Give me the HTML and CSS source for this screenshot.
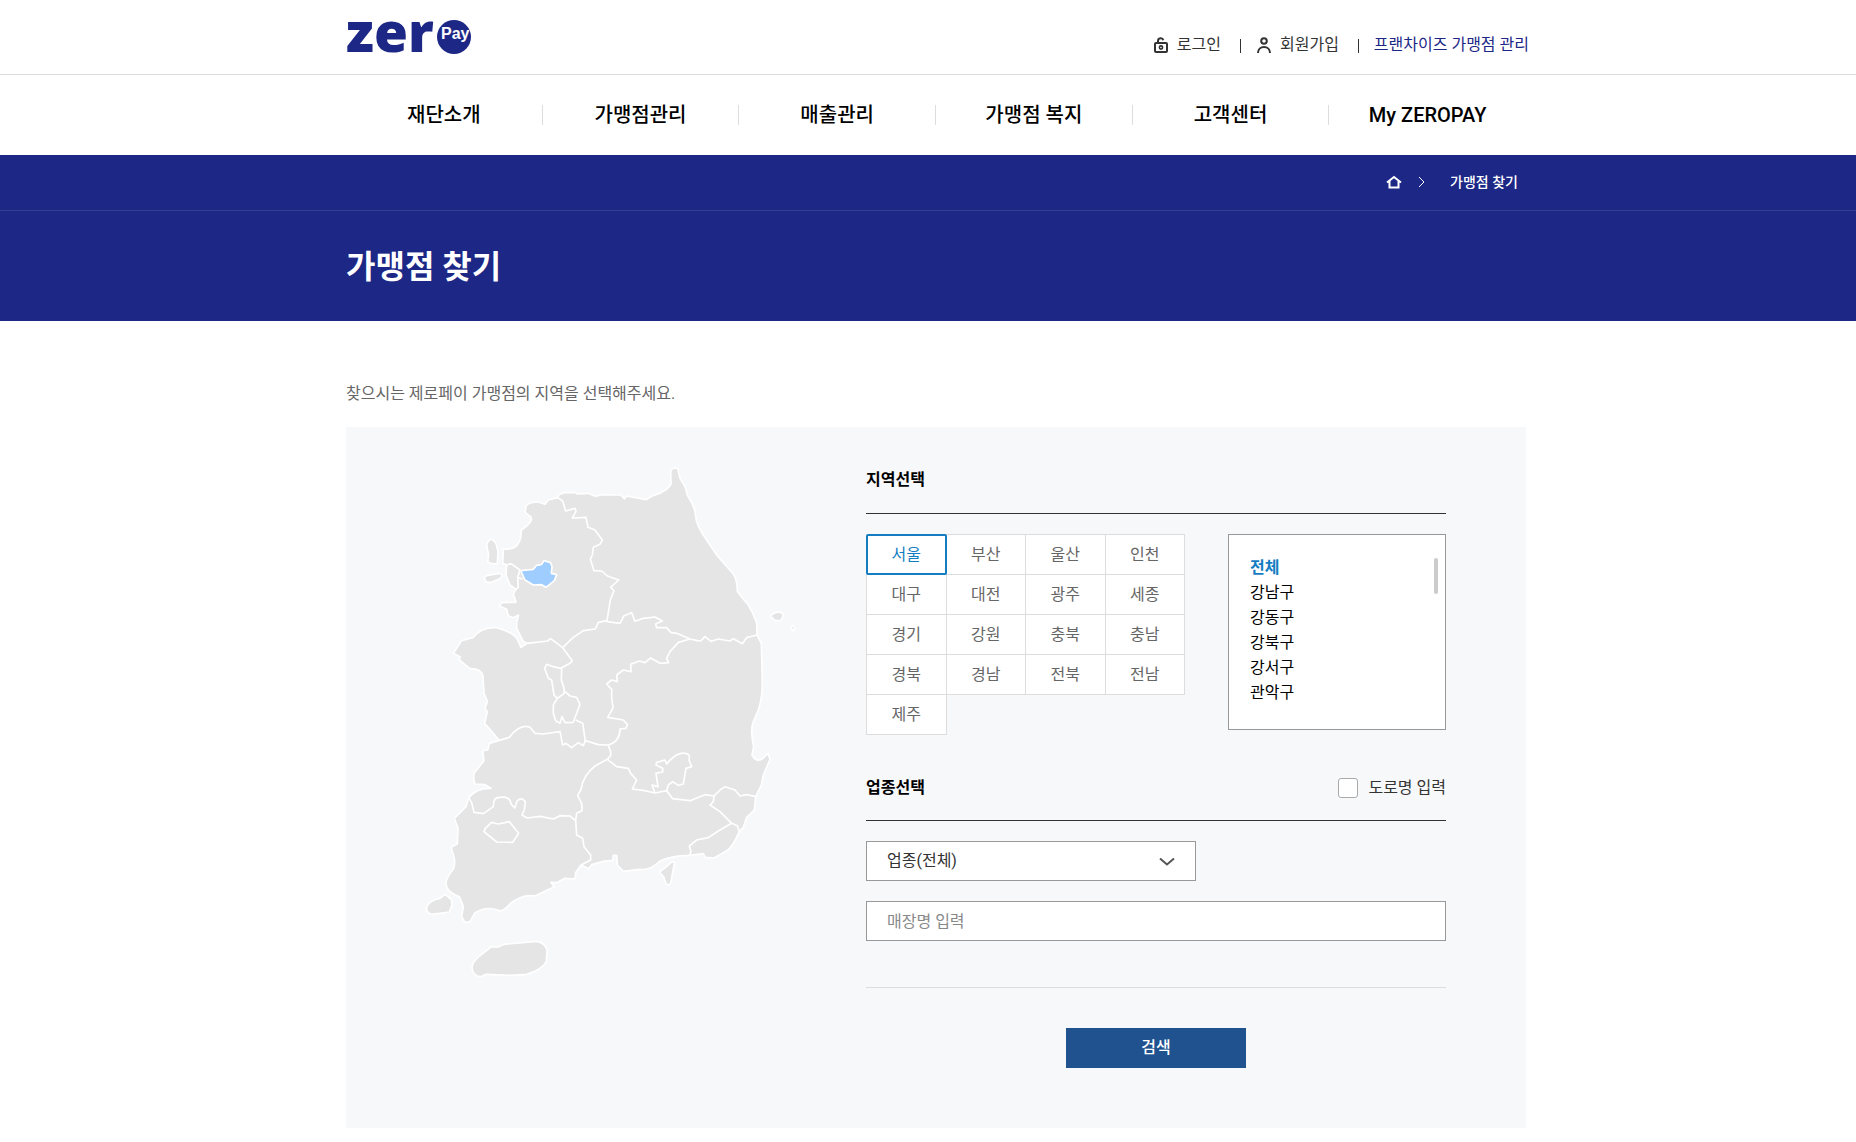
FILE: index.html
```html
<!DOCTYPE html>
<html lang="ko">
<head>
    <meta charset="UTF-8">
    <meta name="viewport" content="width=device-width, initial-scale=1.0">
    <title>가맹점 찾기 | 제로페이</title>
    <link rel="stylesheet" href="styles.css">
</head>
<body>
    <header>
        <div class="top">
            <div class="inner top_inner">
                <a class="logo" href="#" aria-label="zeroPay">
                    <svg width="128" height="44" viewBox="0 0 128 44">
                        <circle cx="108" cy="25" r="17" fill="#1c2786"/>
                        <text class="logo_zer" x="0" y="40">zer</text>
                        <text class="logo_pay" x="95" y="27">Pay</text>
                    </svg>
                </a>
                <nav class="util">
                    <a href="#">
                        <svg width="16" height="18" viewBox="0 0 16 18" fill="none" stroke="#333" stroke-width="2">
                            <rect x="2" y="7" width="12" height="9" rx="1"/>
                            <path d="M5 7V5a2.700 2.700 0 0 1 5.300-.7"/>
                            <circle cx="8" cy="11.500" r="1.600" stroke-width="1.600"/>
                        </svg>
                        로그인
                    </a>
                    <a href="#">
                        <svg width="16" height="18" viewBox="0 0 16 18" fill="none" stroke="#333" stroke-width="2">
                            <circle cx="8" cy="5" r="2.800"/>
                            <path d="M2 17c0-3.500 2.500-6 6-6s6 2.500 6 6"/>
                        </svg>
                        회원가입
                    </a>
                    <a class="franchise" href="#">프랜차이즈 가맹점 관리</a>
                </nav>
            </div>
        </div>
        <nav class="inner gnb">
            <a href="#">재단소개</a>
            <a href="#">가맹점관리</a>
            <a href="#">매출관리</a>
            <a href="#">가맹점 복지</a>
            <a href="#">고객센터</a>
            <a href="#">My ZEROPAY</a>
        </nav>
    </header>
    <section class="visual">
        <div class="location">
            <div class="inner location_inner">
                <a href="#" aria-label="홈">
                    <svg width="16" height="14" viewBox="0 0 16 14" fill="none" stroke="#fff" stroke-width="2">
                        <path d="M1 7.500L8 2l7 5.500M3.500 6v6.500h9V6"/>
                    </svg>
                </a>
                <svg width="8" height="12" viewBox="0 0 8 12" fill="none" stroke="#fff">
                    <path d="M1 1l5 5-5 5"/>
                </svg>
                <span>가맹점 찾기</span>
            </div>
        </div>
        <div class="inner"><h1>가맹점 찾기</h1></div>
    </section>
    <main class="inner">
        <p class="guide">찾으시는 제로페이 가맹점의 지역을 선택해주세요.</p>
        <div class="search_box">
            <svg class="map" viewBox="0 0 1200 1650" role="img" aria-label="전국 지도">
                <!-- 본토 -->
                <path class="land" d="M443 143L446 134 462 128 495 127 502 132 535 130 555 139 575 134 632 135 643 146 650 138 708 149 725 139 750 130 770 118 783 103 782 66Q784 53 795 55Q804 50 806 68L810 85 825 110 833 137Q856 170 857 200Q860 225 880 255L920 315 970 372Q982 390 982 425L1015 465Q1030 490 1040 518L1041 555 1054 580 1057 700Q1057 745 1045 780L1030 815Q1020 840 1031 890L1026 915Q1040 940 1060 924L1074 910 1080 928 1060 975 1054 1005 1037 1040 1033 1080 1010 1102 1000 1132 988 1145Q965 1195 950 1202L912 1224 885 1222 880 1211 838 1216Q780 1218 750 1233Q720 1262 690 1258L640 1264 622 1245 620 1216 610 1216 608 1231 580 1234 545 1244 536 1256 513 1245 497 1268 495 1287 465 1285 440 1298 422 1297 433 1310 375 1338Q335 1332 300 1362Q275 1390 262 1380Q230 1368 195 1388L180 1415 165 1418 155 1400 160 1370 148 1340Q105 1325 108 1295Q112 1280 130 1257Q140 1235 125 1200L125 1190 142 1182 144 1135 133 1105 168 1070 176 1043Q200 1013 243 1015L225 1004 195 1002Q185 970 200 960L222 932 218 902 233 900 238 880 268 871 224 820 232 785 225 775 232 755 222 730 219 680Q215 655 180 656L148 630 150 620 130 610 155 572 190 562Q215 530 260 533Q320 550 325 575L333 592 352 580 340 575 320 535 320 515 326 495 310 503 295 497 290 478 268 468 275 458 318 457 310 432 318 418 300 405 288 375 290 345 278 340 280 297Q315 300 325 280Q334 268 334 240L350 228Q370 210 362 200L345 187 348 168Q360 155 385 156L405 163 415 150Z"/>
                <!-- 시도 경계 -->
                <g class="border">
                    <path d="M443 143L458 153 467 183 495 175 498 184 487 204 528 202 534 232 555 240 577 270 570 283 550 292 547 315 541 328 552 362 575 363 592 378 626 390 602 412 612 422 601 450 591 512 565 517 556 537 520 542 490 562 458 593"/>
                    <path d="M352 580L412 573 422 566 458 593"/>
                    <path d="M591 515L630 520 642 497 665 488 675 514 700 505 735 501 757 513 737 522 740 533 770 533 782 547 800 550 840 567 862 572 872 573 885 560 903 574 925 567 960 573 970 566 997 581 1010 563 1041 555"/>
                    <path d="M840 567L805 577 780 605 770 625 776 638 750 640 722 624 705 638 688 633 662 643 663 665 640 660 620 675 622 695 605 690 590 702 605 718 605 745 609 770 606 780 593 802 640 810 652 823 648 835 630 837Q630 875 595 885"/>
                    <path d="M458 593L487 632 480 640 452 655 430 650 410 643 404 655 415 685 425 690 432 735 442 745 463 730 462 715 454 690 455 655"/>
                    <path d="M442 745L430 765 430 790 437 812 450 820 456 800 465 818 490 817 500 790 510 763 500 742 480 738 465 725"/>
                    <path d="M497 810L518 820 526 872 565 884 595 885 602 905 602 917 592 928 555 948Q520 975 512 1020L503 1037 515 1060 516 1082 500 1090 497 1112 500 1155 518 1165 522 1190 542 1215 542 1230 513 1245"/>
                    <path d="M268 871L298 862Q330 820 360 832L375 850 400 852 450 845 454 865 458 885 468 880 485 893 505 878 520 887 526 872"/>
                    <path d="M176 1043L185 1058 192 1087 220 1091 250 1070Q250 1040 270 1042Q300 1038 303 1062L314 1074 322 1052Q335 1040 346 1055L343 1080 336 1095 352 1104 390 1099 430 1107 450 1097 480 1098 497 1112"/>
                    <path d="M592 928L620 950 655 955 662 970 680 990 667 1017 700 1021 735 1029 770 1022 788 1046 840 1052 885 1034 912 1038"/>
                    <path d="M735 1029L726 1005 744 1010 738 970 758 966 758 955 738 945 740 937 765 930 770 942Q800 905 825 910Q842 910 837 930L845 950 828 955 820 1002 805 1006 788 995 775 1005 770 1022"/>
                    <path d="M912 1038L930 1020 945 1010 975 1020 990 1038 1010 1034 1037 1040"/>
                    <path d="M912 1038L910 1055 900 1065 930 1085 965 1120"/>
                    <path d="M838 1216L843 1205 838 1188 860 1170 895 1163 925 1143 965 1120 982 1127 988 1145"/>
                    <path d="M245 1117L265 1122 298 1115 326 1150 308 1177 260 1176 222 1145 226 1135Z"/>
                    <path d="M290 345L303 341 330 360 323 382 338 388M323 382L325 412 315 420"/>
                </g>
                <path class="land on" d="M332 362L370 358 380 346 395 343 402 332 422 338 426 350 424 370 440 374 433 392 408 412 395 404 370 405 345 390Z"/>
                <!-- 섬 -->
                <path class="land" d="M230 285Q235 265 248 269L258 280 264 305 262 340Q245 345 233 335L236 315Z"/>
                <path class="land" d="M222 383L232 376 270 370Q282 375 270 386L240 398 228 395Z"/>
                <path class="land" d="M1082 498Q1098 480 1118 490Q1120 505 1112 511L1095 512Z"/>
                <path class="land" d="M1143 530L1150 526 1155 535 1149 543Z"/>
                <path class="land" d="M50 1372Q55 1352 90 1345L105 1333 124 1349 126 1365 118 1386 65 1393Q48 1388 50 1372Z"/>
                <path class="land" d="M748 1266L770 1250 786 1235 794 1236 782 1300Q772 1310 767 1298L762 1282Z"/>
                <path class="land" d="M186 1555Q185 1535 215 1513L243 1491 265 1491 282 1483 380 1474Q405 1478 411 1500L409 1535Q395 1560 350 1573L300 1576 228 1573 213 1580Q190 1580 186 1555Z"/>
            </svg>
            <form class="search_form">
                <h2>지역선택</h2>
                <div class="area">
                    <div class="sido">
                        <button type="button" class="on">서울</button>
                        <button type="button">부산</button>
                        <button type="button">울산</button>
                        <button type="button">인천</button>
                        <button type="button">대구</button>
                        <button type="button">대전</button>
                        <button type="button">광주</button>
                        <button type="button">세종</button>
                        <button type="button">경기</button>
                        <button type="button">강원</button>
                        <button type="button">충북</button>
                        <button type="button">충남</button>
                        <button type="button">경북</button>
                        <button type="button">경남</button>
                        <button type="button">전북</button>
                        <button type="button">전남</button>
                        <button type="button">제주</button>
                    </div>
                    <div class="gugun">
                        <ul>
                            <li><a class="on" href="#">전체</a></li>
                            <li><a href="#">강남구</a></li>
                            <li><a href="#">강동구</a></li>
                            <li><a href="#">강북구</a></li>
                            <li><a href="#">강서구</a></li>
                            <li><a href="#">관악구</a></li>
                        </ul>
                        <span class="scroll_bar"></span>
                    </div>
                </div>
                <div class="title_row">
                    <h2>업종선택</h2>
                    <label class="road"><input type="checkbox" id="roadCheck">도로명 입력</label>
                </div>
                <div class="select_wrap">
                    <select id="bizType" aria-label="업종">
                        <option>업종(전체)</option>
                    </select>
                    <svg class="arrow" width="16" height="10" viewBox="0 0 16 10" fill="none" stroke="#555" stroke-width="2">
                        <path d="M1 1.500l7 6 7-6"/>
                    </svg>
                </div>
                <input class="shop_name" type="text" id="shopName" aria-label="매장명" placeholder="매장명 입력">
                <div class="btn_area">
                    <button type="submit" class="btn_search">검색</button>
                </div>
            </form>
        </div>
    </main>
</body>
</html>
```
FILE: styles.css
```css
* {
    box-sizing: border-box;
}

body {
    margin: 0;
    background: #fff;
    color: #333;
    font-family: Roboto, "Noto Sans CJK KR", sans-serif;
    font-size: 16px;
    line-height: 24px;
}

h1, h2, p, ul {
    margin: 0;
    padding: 0;
}

ul {
    list-style: none;
}

a {
    color: inherit;
    text-decoration: none;
}

button, input, select {
    font: inherit;
}

svg {
    display: block;
}

.inner {
    max-width: 1196px;
    margin: 0 auto;
    padding-left: 16px;
}

/* 상단 */
.top {
    height: 75px;
    border-bottom: 1px solid #ddd;
}

.top_inner {
    display: flex;
    justify-content: space-between;
}

.logo {
    padding-top: 12px;
}

.logo svg {
    overflow: visible;
}

.logo_zer {
    fill: #1c2786;
    font: 800 55px "Open Sans", sans-serif;
}

.logo_pay {
    fill: #fff;
    font: bold 16px "Liberation Sans", sans-serif;
}

.util {
    display: flex;
    margin-right: -3px;
    padding-top: 33px;
}

.util a {
    display: flex;
    align-items: center;
    gap: 8px;
}

.util a + a::before {
    content: "";
    width: 1px;
    height: 14px;
    margin: 2px 7px 0 19px;
    background: #333;
}

.util .franchise {
    color: #1c2786;
}

.gnb {
    display: grid;
    grid-template-columns: repeat(6, 1fr);
    align-items: center;
    height: 80px;
}

.gnb a {
    border-right: 1px solid #ddd;
    color: #000;
    font-size: 20px;
    font-weight: 500;
    line-height: 20px;
    text-align: center;
}

.gnb a:last-child {
    border-right: 0;
}

/* 타이틀 */
.visual {
    background: #1c2786;
    color: #fff;
}

.location {
    border-bottom: 1px solid #333d92;
}

.location_inner {
    display: flex;
    align-items: center;
    justify-content: flex-end;
    height: 55px;
    padding-right: 8px;
    padding-bottom: 1px;
    font-size: 14px;
    font-weight: 500;
}

.location_inner svg {
    margin-right: 16px;
}

.location_inner span {
    margin-left: 8px;
}

.visual h1 {
    padding: 32px 0 30px;
    font-size: 32px;
    line-height: 48px;
}

/* 가맹점 검색 */
.guide {
    padding: 61px 0 21px;
    color: #666;
}

.search_box {
    display: flex;
    justify-content: space-between;
    align-items: flex-start;
    padding: 23px 80px 60px 64px;
    background: #f7f8fa;
}

.map {
    width: 400px;
}

.land {
    fill: #e5e5e5;
    stroke: #fff;
    stroke-width: 5;
    stroke-linejoin: round;
}

.land.on {
    fill: #9fcdff;
}

.border {
    fill: none;
    stroke: #fff;
    stroke-width: 5;
    stroke-linejoin: round;
}

.search_form {
    width: 580px;
    padding-top: 18px;
}

.search_form h2 {
    color: #000;
    font-size: 16px;
    line-height: 24px;
}

.area {
    display: flex;
    justify-content: space-between;
    align-items: flex-start;
    margin-top: 21px;
    padding-top: 20px;
    border-top: 1px solid #333;
}

.sido {
    display: grid;
    grid-template-columns: repeat(4, 1fr);
    width: 318px;
}

.sido button {
    height: 41px;
    margin: 0 -1px -1px 0;
    padding: 0;
    border: 1px solid #ddd;
    background: #fff;
    color: #666;
}

.sido .on {
    position: relative;
    border: 2px solid #147dc2;
    border-radius: 2px;
    color: #147dc2;
}

.gugun {
    position: relative;
    width: 218px;
    height: 196px;
    padding: 21px;
    border: 1px solid #999;
    background: #fff;
}

.gugun li {
    height: 25px;
    color: #000;
}

.gugun .on {
    color: #147dc2;
    font-weight: bold;
}

.scroll_bar {
    position: absolute;
    top: 23px;
    right: 7px;
    width: 4px;
    height: 36px;
    border-radius: 2px;
    background: #ccc;
}

.title_row {
    display: flex;
    justify-content: space-between;
    align-items: center;
    margin-top: 42px;
    padding-bottom: 20px;
    border-bottom: 1px solid #333;
}

.road {
    display: flex;
    align-items: center;
    gap: 10px;
}

.road input {
    appearance: none;
    width: 20px;
    height: 20px;
    margin: 0;
    border: 1px solid #aaa;
    border-radius: 3px;
    background: #fff;
}

.select_wrap {
    position: relative;
    width: 330px;
    margin: 20px 0;
}

.select_wrap select, .shop_name {
    display: block;
    width: 100%;
    height: 40px;
    padding: 0 20px;
    border: 1px solid #999;
    border-radius: 0;
    background: #fff;
    color: #333;
}

.select_wrap select {
    appearance: none;
}

.arrow {
    position: absolute;
    top: 16px;
    right: 21px;
    pointer-events: none;
}

.shop_name::placeholder {
    color: #888;
}

.btn_area {
    margin-top: 46px;
    padding-top: 40px;
    border-top: 1px solid #ddd;
    text-align: center;
}

.btn_search {
    width: 180px;
    height: 40px;
    border: 0;
    background: #1f528f;
    color: #fff;
    font-weight: 500;
}
```
